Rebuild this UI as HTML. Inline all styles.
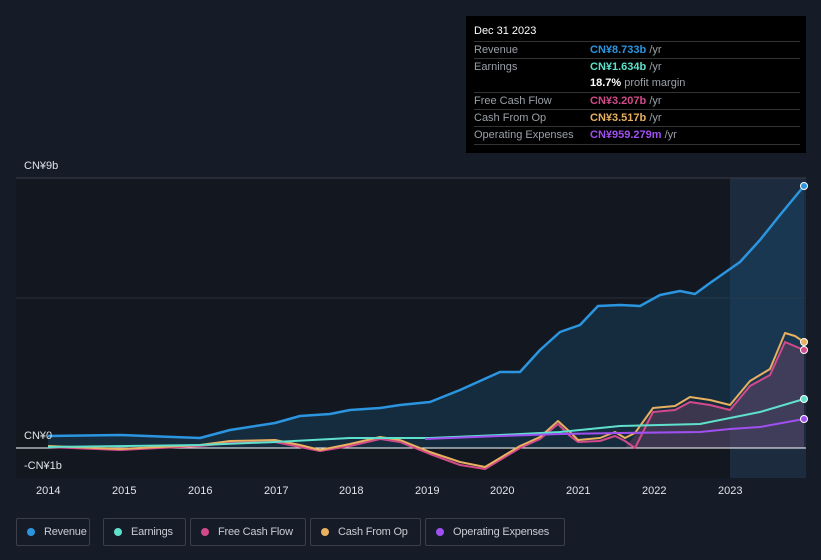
<!DOCTYPE html><html><head><style>
body{margin:0;width:821px;height:560px;background:#151b27;font-family:"Liberation Sans",sans-serif;overflow:hidden;position:relative}
.tt{position:absolute;left:466px;top:16px;width:340px;height:137px;background:#000;color:#fff;font-size:11px}
.tt .h{position:absolute;left:8px;top:9px;font-size:11px}
.row{position:absolute;left:8px;width:326px;border-top:1px solid #333;height:17px;line-height:17px;color:#9aa0a8}
.row span{position:absolute;left:116px}
.lg{position:absolute;top:518px;height:28px;border:1px solid #3a3f4a;border-radius:2px;color:#c8ccd2;font-size:11px;line-height:26px;box-sizing:border-box;letter-spacing:-0.2px}
.lg i{position:absolute;left:10px;top:9px;width:8px;height:8px;border-radius:50%}
.lg b{font-weight:normal;position:absolute;left:27px}
.ax{position:absolute;color:#e0e3e8;font-size:11px}
</style></head><body>
<svg width="821" height="560" style="position:absolute;left:0;top:0">
<rect x="730" y="178" width="76" height="300" fill="#1c2b3e"/>
<rect x="16" y="178" width="714" height="300" fill="#131820"/>
<line x1="16" y1="178" x2="806" y2="178" stroke="#3a3f4a"/>
<line x1="16" y1="298" x2="806" y2="298" stroke="#2a2f3a"/>
<polygon fill="#1a4a6e" opacity="0.4" points="48,448 48,436 120,435 200,438 230,430 275,423 300,416 330,414 350,410 380,408 400,405 430,402 460,390 500,372 520,372 540,350 560,332 580,325 598,306 620,305 640,306 660,295 680,291 695,294 710,283 740,262 760,240 780,215 804,186 804,448"/>
<polygon fill="#8a4a6e" opacity="0.35" points="625,448 653,412 675,410 690,402 710,405 730,410 750,386 770,375 785,342 804,350 804,448"/>
<line x1="16" y1="448" x2="806" y2="448" stroke="#fff" stroke-width="1"/>
<g fill="none" stroke-width="2" stroke-linejoin="round">
<polyline stroke="#d34a8a" points="48,447 120,450 200,446 230,443 275,442 300,447 320,451 350,446 380,439 400,442 430,454 460,465 485,469 500,460 520,448 540,439 558,424 570,436 578,442 600,441 615,436 625,441 635,448 653,412 675,410 690,402 710,405 730,410 750,386 770,375 785,342 804,350"/>
<polyline stroke="#e8b060" points="48,446 120,449 200,445 230,441 275,440 300,445 320,450 350,444 380,437 400,440 430,452 460,462 485,467 500,458 520,446 540,437 558,421 570,432 578,440 600,438 615,432 625,438 635,433 653,408 675,406 690,397 710,400 730,405 750,381 770,369 785,333 795,336 804,342"/>
<polyline stroke="#5ee0cc" points="48,447 200,445 275,442 350,438 430,438 500,435 560,432 620,426 700,424 730,418 760,412 804,399"/>
<polyline stroke="#a050f0" points="425,439 500,436 560,434 620,433 700,432 730,429 760,427 804,419"/>
<polyline stroke="#2b95e0" stroke-width="2.5" points="48,436 120,435 200,438 230,430 275,423 300,416 330,414 350,410 380,408 400,405 430,402 460,390 500,372 520,372 540,350 560,332 580,325 598,306 620,305 640,306 660,295 680,291 695,294 710,283 740,262 760,240 780,215 804,186"/>
</g>
<circle cx="804" cy="186" r="3.5" fill="#2b95e0" stroke="#fff"/>
<circle cx="804" cy="342" r="3.5" fill="#e8b060" stroke="#fff"/>
<circle cx="804" cy="350" r="3.5" fill="#d34a8a" stroke="#fff"/>
<circle cx="804" cy="399" r="3.5" fill="#5ee0cc" stroke="#fff"/>
<circle cx="804" cy="419" r="3.5" fill="#a050f0" stroke="#fff"/>
</svg>
<div class="ax" style="left:24px;top:160px">CN¥9b</div>
<div class="ax" style="left:24px;top:430px">CN¥0</div>
<div class="ax" style="left:24px;top:460px">-CN¥1b</div>
<div class="ax" style="left:36px;top:485px">2014</div><div class="ax" style="left:112px;top:485px">2015</div><div class="ax" style="left:188px;top:485px">2016</div><div class="ax" style="left:264px;top:485px">2017</div><div class="ax" style="left:339px;top:485px">2018</div><div class="ax" style="left:415px;top:485px">2019</div><div class="ax" style="left:490px;top:485px">2020</div><div class="ax" style="left:566px;top:485px">2021</div><div class="ax" style="left:642px;top:485px">2022</div><div class="ax" style="left:718px;top:485px">2023</div>
<div class="tt"><div class="h">Dec 31 2023</div>
<div class="row" style="top:25px">Revenue<span style="color:#2b95e0;font-weight:bold">CN¥8.733b <i style="font-style:normal;font-weight:normal;color:#9aa0a8">/yr</i></span></div>
<div class="row" style="top:42px">Earnings<span style="color:#5ee0cc;font-weight:bold">CN¥1.634b <i style="font-style:normal;font-weight:normal;color:#9aa0a8">/yr</i></span></div>
<div class="row" style="top:59px;border:none"><span style="color:#fff;font-weight:bold">18.7% <i style="font-style:normal;font-weight:normal;color:#9aa0a8">profit margin</i></span></div>
<div class="row" style="top:76px">Free Cash Flow<span style="color:#d34a8a;font-weight:bold">CN¥3.207b <i style="font-style:normal;font-weight:normal;color:#9aa0a8">/yr</i></span></div>
<div class="row" style="top:93px">Cash From Op<span style="color:#e8b060;font-weight:bold">CN¥3.517b <i style="font-style:normal;font-weight:normal;color:#9aa0a8">/yr</i></span></div>
<div class="row" style="top:110px;border-bottom:1px solid #333">Operating Expenses<span style="color:#a050f0;font-weight:bold">CN¥959.279m <i style="font-style:normal;font-weight:normal;color:#9aa0a8">/yr</i></span></div>
</div>
<div class="lg" style="left:16px;width:74px"><i style="background:#2b95e0"></i><b>Revenue</b></div>
<div class="lg" style="left:103px;width:83px"><i style="background:#5ee0cc"></i><b>Earnings</b></div>
<div class="lg" style="left:190px;width:116px"><i style="background:#d34a8a"></i><b>Free Cash Flow</b></div>
<div class="lg" style="left:310px;width:111px"><i style="background:#e8b060"></i><b>Cash From Op</b></div>
<div class="lg" style="left:425px;width:140px"><i style="background:#a050f0"></i><b>Operating Expenses</b></div>
</body></html>
